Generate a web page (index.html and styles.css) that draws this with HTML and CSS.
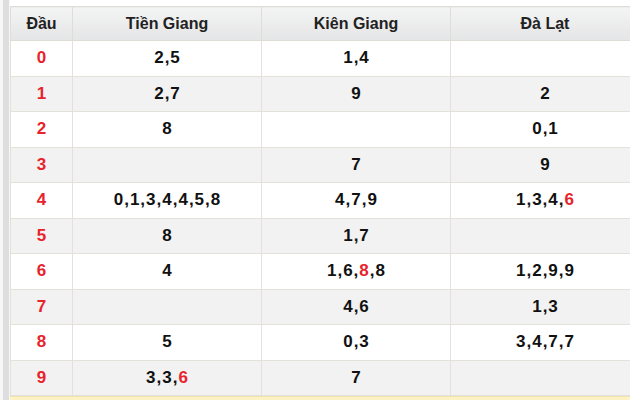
FILE: index.html
```html
<!DOCTYPE html>
<html>
<head>
<meta charset="utf-8">
<link rel="stylesheet" href="styles.css">
</head>
<body>
<div class="page">
  <div class="gutter"><div class="bar"></div></div>
  <div class="main">
    <table class="loto">
      <colgroup>
        <col class="c-dau"><col class="c-prov"><col class="c-prov"><col class="c-prov">
      </colgroup>
      <thead>
        <tr><th>Đầu</th><th>Tiền Giang</th><th>Kiên Giang</th><th>Đà Lạt</th></tr>
      </thead>
      <tbody>
        <tr><td class="dau">0</td><td>2,5</td><td>1,4</td><td></td></tr>
        <tr><td class="dau">1</td><td>2,7</td><td>9</td><td>2</td></tr>
        <tr><td class="dau">2</td><td>8</td><td></td><td>0,1</td></tr>
        <tr><td class="dau">3</td><td></td><td>7</td><td>9</td></tr>
        <tr><td class="dau">4</td><td>0,1,3,4,4,5,8</td><td>4,7,9</td><td>1,3,4,<span class="red">6</span></td></tr>
        <tr><td class="dau">5</td><td>8</td><td>1,7</td><td></td></tr>
        <tr><td class="dau">6</td><td>4</td><td>1,6,<span class="red">8</span>,8</td><td>1,2,9,9</td></tr>
        <tr><td class="dau">7</td><td></td><td>4,6</td><td>1,3</td></tr>
        <tr><td class="dau">8</td><td>5</td><td>0,3</td><td>3,4,7,7</td></tr>
        <tr><td class="dau">9</td><td>3,3,<span class="red">6</span></td><td>7</td><td></td></tr>
      </tbody>
    </table>
    <div class="note"></div>
  </div>
</div>
</body>
</html>
```
FILE: styles.css
```css
html, body {
  margin: 0;
  padding: 0;
  background: #ffffff;
  overflow: hidden;
}
.page {
  display: flex;
  width: 630px;
  height: 400px;
  overflow: hidden;
  font-family: "Liberation Sans", Arial, sans-serif;
}
.gutter {
  width: 10px;
  flex: none;
  display: flex;
  background: #f7f7f7;
}
.bar {
  margin-left: 3px;
  width: 6px;
  background: #dedede;
}
.main {
  flex: none;
  width: 640px;
  padding-top: 6px;
  background: #fff;
}
.loto {
  border-collapse: collapse;
  table-layout: fixed;
  width: 628px;
}
.c-dau { width: 62px; }
.c-prov { width: 189px; }
.loto th {
  height: 33px;
  padding: 0;
  font-size: 16px;
  font-weight: bold;
  color: #222;
  text-align: center;
  background: linear-gradient(#f4f4f4, #e4e5e6);
  border: 1px solid #e0dcd6;
}
.loto td {
  height: 34.5px;
  padding: 0 0 0 1px;
  font-size: 17px;
  letter-spacing: 1px;
  font-weight: bold;
  color: #111;
  text-align: center;
  border: 1px solid #e4e0da;
}
.loto tbody tr:nth-child(odd) td { background: #ffffff; }
.loto tbody tr:nth-child(even) td { background: #f2f2f2; }
.loto td.dau { color: #e8232b; }
.red { color: #e8232b; }
.note {
  height: 10px;
  background: #fdf2c4;
  border-top: 1px solid #efe3b0;
}
```
